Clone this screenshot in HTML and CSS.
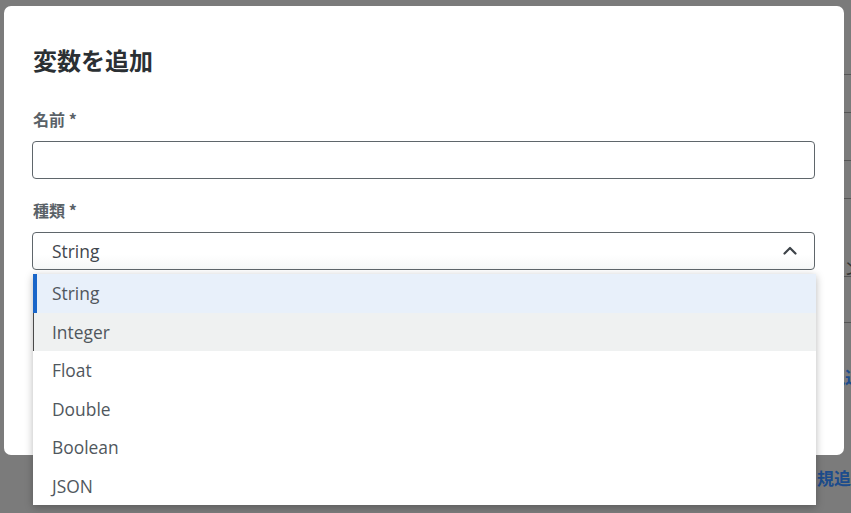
FILE: index.html
```html
<!DOCTYPE html>
<html lang="ja">
<head>
<meta charset="utf-8">
<link rel="stylesheet" href="styles.css">
<title>変数を追加</title>
</head>
<body>
<div class="page">
  <aside class="side">
    <div class="side-row r1"></div>
    <div class="side-row r2"></div>
    <div class="side-row r3"></div>
    <div class="side-row r4"></div>
    <div class="side-row r5"><span class="dark-txt">ン</span></div>
    <div class="side-row r6"></div>
    <div class="side-row r7"><span class="blue-txt t1">新規追加</span></div>
    <div class="side-row r8"><span class="blue-txt t2">規追</span></div>
  </aside>
</div>

<div class="modal" role="dialog">
  <h2 class="title">変数を追加</h2>
  <label class="label">名前 *</label>
  <div class="input"></div>
  <label class="label">種類 *</label>
  <div class="select">
    <span class="select-value">String</span>
    <svg class="chev" width="14" height="9" viewBox="0 0 14 9"><path d="M1.5 7.5 L7 2 L12.5 7.5" fill="none" stroke="#3d4348" stroke-width="2.2" stroke-linecap="round" stroke-linejoin="round"/></svg>
  </div>
</div>

<ul class="menu">
  <li class="item selected">String</li>
  <li class="item hover">Integer</li>
  <li class="item">Float</li>
  <li class="item">Double</li>
  <li class="item">Boolean</li>
  <li class="item">JSON</li>
</ul>
</body>
</html>
```

FILE: styles.css
```css
* { box-sizing: border-box; }
html, body {
  margin: 0;
  padding: 0;
  width: 851px;
  height: 513px;
  overflow: hidden;
}
body {
  background: #7b7b7b;
  font-family: "Open Sans", "Noto Sans CJK JP", sans-serif;
}
.page {
  height: 513px;
  display: flex;
  justify-content: flex-end;
}
.side {
  width: 100px;
  display: flex;
  flex-direction: column;
}
.side-row {
  border-bottom: 1px solid #555;
  position: relative;
}
.r1 { height: 75px; }
.r2 { height: 38px; }
.r3 { height: 48px; }
.r4 { height: 38px; }
.r5 { height: 78px; }
.r6 { height: 46px; }
.r7 { height: 95px; border-bottom: none; }
.r8 { height: 60px; border-bottom: none; }
.blue-txt {
  position: absolute;
  font-family: "Noto Sans CJK JP", sans-serif;
  font-weight: 700;
  font-size: 17px;
  line-height: 20px;
  color: #1c4c8c;
  white-space: nowrap;
}
.t1 { left: 60px; top: 44px; }
.t2 { left: 66px; top: 50px; }
.dark-txt {
  position: absolute;
  left: 93px;
  top: 56px;
  font-family: "Noto Sans CJK JP", sans-serif;
  font-size: 17px;
  color: #333;
}

.modal {
  position: absolute;
  left: 4px;
  top: 6px;
  width: 840px;
  height: 449px;
  background: #fff;
  border-radius: 7px;
  padding: 38px 28px 0 28px;
  display: flex;
  flex-direction: column;
}
.title {
  margin: 0;
  font-family: "Noto Sans CJK JP", sans-serif;
  font-size: 24px;
  line-height: 32px;
  font-weight: 700;
  color: #2b3034;
  padding-left: 1px;
}
.label {
  display: block;
  font-family: "Noto Sans CJK JP", sans-serif;
  font-size: 16px;
  line-height: 24px;
  font-weight: 700;
  color: #5a6268;
  margin: 30.5px 0 10.5px 1px;
}
.input + .label { margin-top: 18.5px; }
.input, .select {
  height: 38px;
  width: 783px;
  border: 1px solid #5f666b;
  border-radius: 4px;
  background: #fff;
}
.select {
  display: flex;
  align-items: center;
  justify-content: space-between;
  padding: 0 17px 0 19px;
  background: linear-gradient(#fff 60%, #f6f7f7);
}
.select-value {
  font-size: 17.4px;
  color: #3f464c;
}
.chev { display: block; margin-top: -1px; }

.menu {
  position: absolute;
  left: 33px;
  top: 274px;
  width: 783px;
  margin: 0;
  padding: 0;
  list-style: none;
  background: #fff;
  box-shadow: 0 2px 8px rgba(0,0,0,0.28);
}
.item {
  height: 38.5px;
  display: flex;
  align-items: center;
  padding-left: 19px;
  font-size: 17.4px;
  color: #50575d;
}
.item.selected {
  background: #e8f0fa;
  box-shadow: inset 4px 0 0 #1a66c9;
}
.item.hover {
  background: #eff1f1;
  box-shadow: inset 1px 0 0 #4a4a4a;
}
```
